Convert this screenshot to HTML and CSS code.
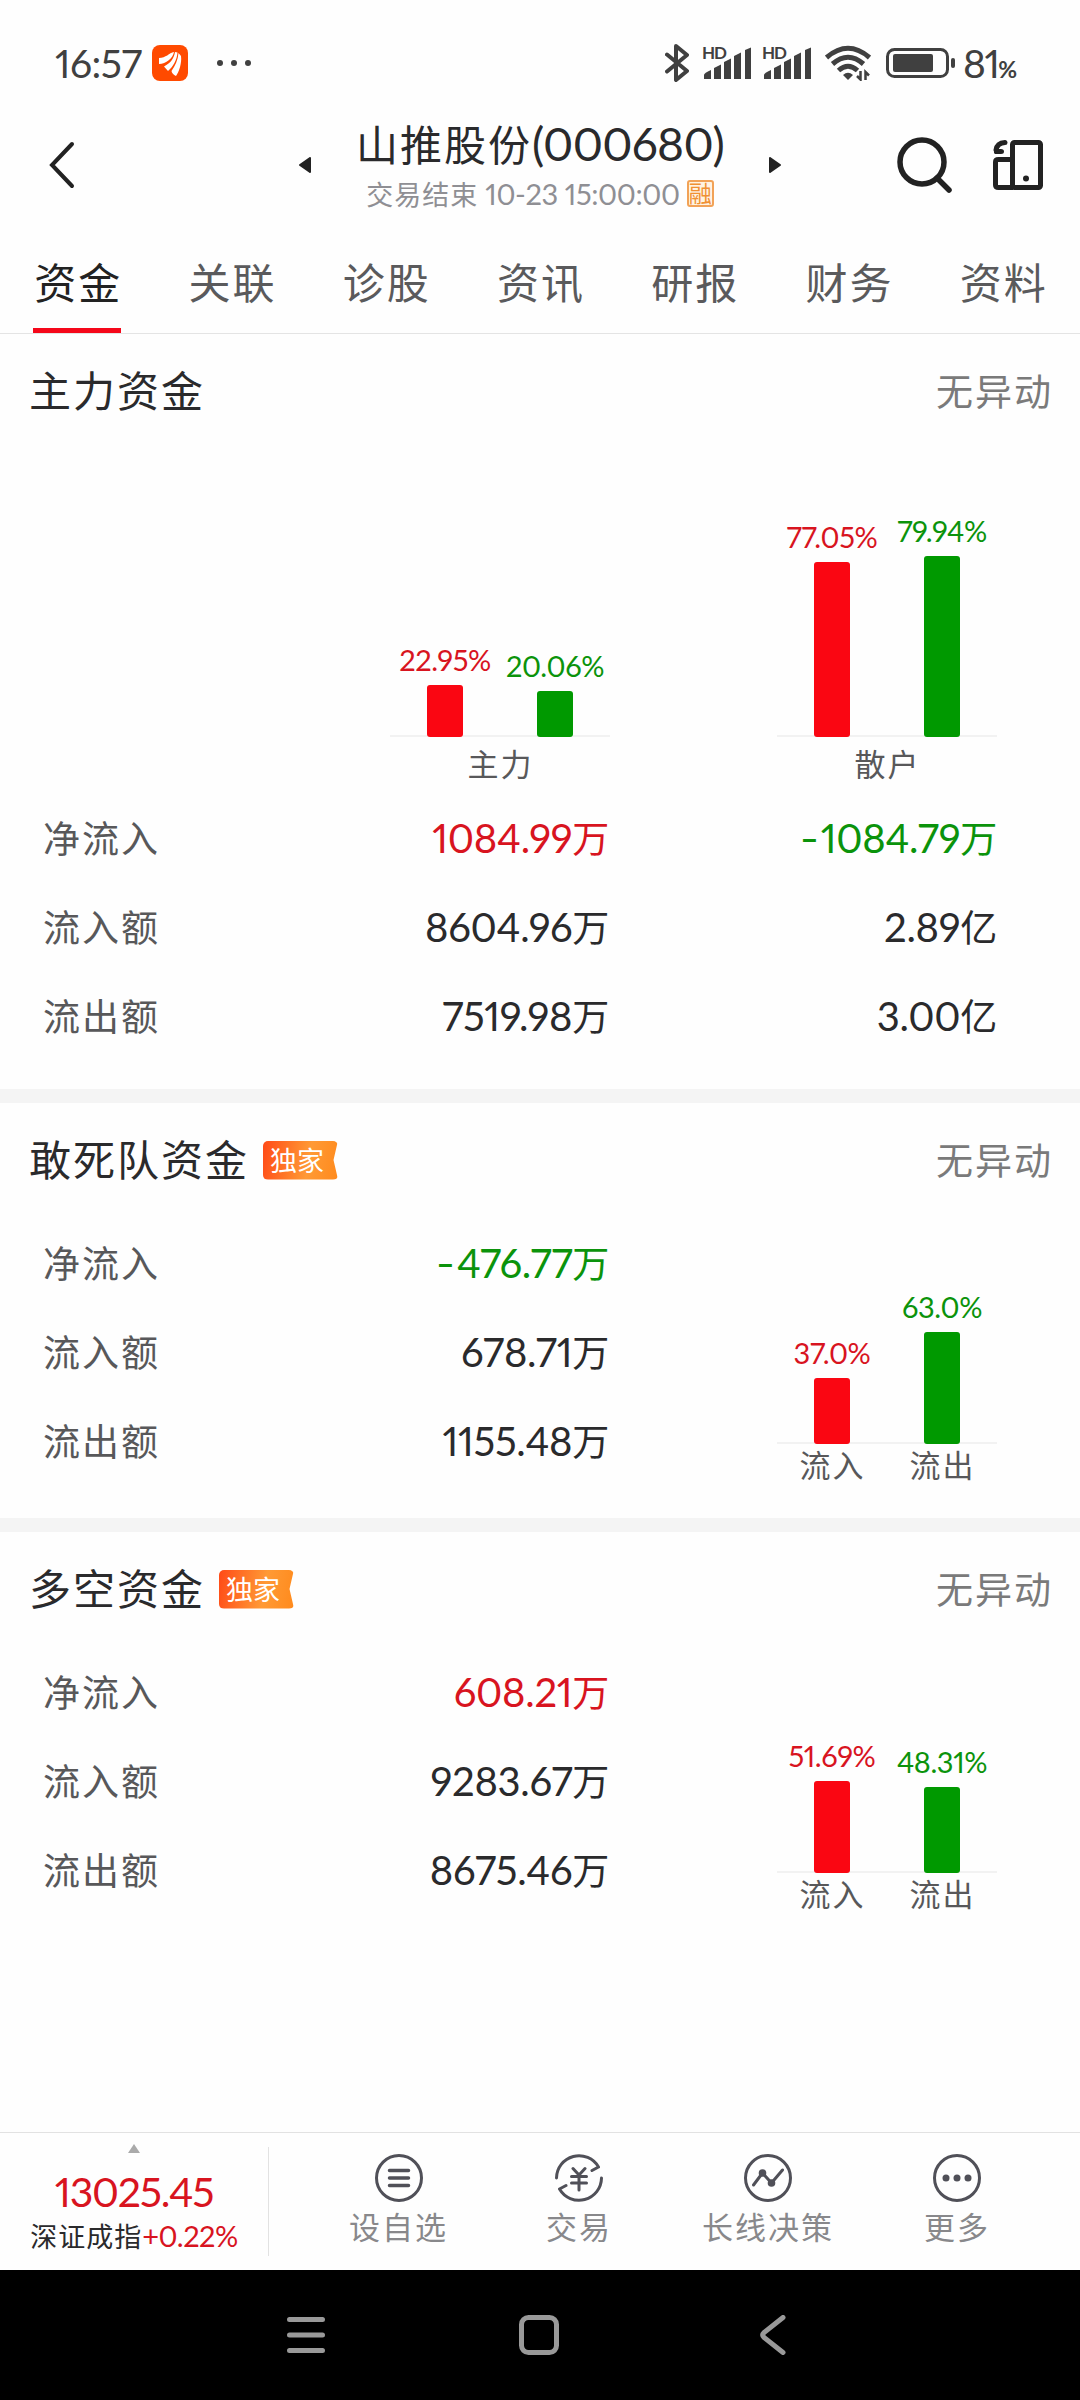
FILE: index.html
```html
<!DOCTYPE html>
<html lang="zh-CN">
<head>
  <meta charset="UTF-8">
  <meta name="viewport" content="width=device-width, initial-scale=1.0">
  <title>山推股份(000680)</title>
  <link rel="stylesheet" href="styles.css">
</head>
<body>
  <div class="status">
    <span class="time">16:57</span>
    <svg class="app" width="36" height="36" viewBox="0 0 36 36">
      <rect width="36" height="36" rx="8" fill="#ff4a00"/>
      <path d="M7 13C14 13 17 8 22 7C21 13 14 19 7 19Z" fill="#fff"/>
      <path d="M12 21.500C19 18 22 13 23 7L25.500 7.500C25 15 21 22 16 26Z" fill="#fff"/>
      <path d="M19.500 26C23 21 26 15 26.500 8L29 11C30 18 27 27 24 31Q20 29 19.500 26Z" fill="#fff"/>
    </svg>
    <span class="dots"><i></i><i></i><i></i></span>
    <div class="signals">
      <svg width="24" height="40" viewBox="0 0 24 40" fill="none" stroke="#404040" stroke-width="4" stroke-linejoin="round" stroke-linecap="round">
        <path d="M2 11.500L22 28L11 37V3L22 12L2 28.500"/>
      </svg>
      <div class="sim">
        <span>HD</span>
        <svg width="50" height="34" viewBox="0 0 50 34" fill="#404040">
          <path d="M2 33V29Q2 27 9 24V33ZM12 33V22L19 18.500V33ZM22 33V16L29 12.500V33ZM32 33V10L39 6.500V33ZM43 33V4L49 1.500V33Z"/>
        </svg>
      </div>
      <div class="sim">
        <span>HD</span>
        <svg width="50" height="34" viewBox="0 0 50 34" fill="#404040">
          <path d="M2 33V29Q2 27 9 24V33ZM12 33V22L19 18.500V33ZM22 33V16L29 12.500V33ZM32 33V10L39 6.500V33ZM43 33V4L49 1.500V33Z"/>
        </svg>
      </div>
      <svg class="wifi" width="46" height="36" viewBox="0 0 46 36" fill="none" stroke="#404040" stroke-width="5">
        <path d="M1.500 12.500Q23-6 44.500 12.500"/>
        <path d="M7.500 19Q23 5.500 38.500 19"/>
        <path d="M13.500 25.500Q23 17 32.500 25.500"/>
        <path d="M18 30Q23 25.500 28 30L23 35Z" fill="#404040" stroke="none"/>
        <path d="M35.500 26V34.500L32 31M40.500 35V27L44 30.500" stroke-width="2.500"/>
      </svg>
      <svg class="battery" width="70" height="30" viewBox="0 0 70 30">
        <rect x="1.500" y="1.500" width="60" height="27" rx="7" fill="none" stroke="#404040" stroke-width="3"/>
        <rect x="7" y="6" width="40" height="18" rx="2" fill="#404040"/>
        <rect x="65" y="10" width="4" height="10" rx="2" fill="#404040"/>
      </svg>
      <span class="power">81<small>%</small></span>
    </div>
  </div>

  <header class="header">
    <svg class="back" width="26" height="48" viewBox="0 0 26 48" fill="none" stroke="#222" stroke-width="4" stroke-linecap="round">
      <path d="M23 3L3 24L23 45"/>
    </svg>
    <svg class="prev" width="12" height="16" viewBox="0 0 12 16"><path d="M11 1V15L1 8Z" fill="#222" stroke="#222" stroke-width="2" stroke-linejoin="round"/></svg>
    <div class="stock">
      <h1>山推股份<b>(000680)</b></h1>
      <p><span class="cn">交易结束</span> 10-23 15:00:00<span class="rong">融</span></p>
    </div>
    <svg class="next" width="12" height="16" viewBox="0 0 12 16"><path d="M1 1V15L11 8Z" fill="#222" stroke="#222" stroke-width="2" stroke-linejoin="round"/></svg>
    <svg class="search" width="57" height="57" viewBox="0 0 57 57" fill="none" stroke="#222" stroke-width="5.500">
      <circle cx="26" cy="26" r="22"/>
      <path d="M41 42L53 54" stroke-linecap="round"/>
    </svg>
    <svg class="trade" width="50" height="50" viewBox="0 0 50 50" fill="none" stroke="#222" stroke-width="5">
      <rect x="19.500" y="2.500" width="28" height="45" rx="2"/>
      <path d="M19.500 19.500H5.500Q2.500 19.500 2.500 22V45Q2.500 47.500 5.500 47.500H20"/>
      <path d="M12 2.500Q4 3 3 10" stroke-linecap="round"/>
      <path d="M1 13V9H8Q11 9 11 11.500T8 14H2Z" fill="#222" stroke="none"/>
      <circle cx="33" cy="38.500" r="3" fill="#222" stroke="none"/>
    </svg>
  </header>

  <nav class="tabs">
    <span class="active">资金</span>
    <span>关联</span>
    <span>诊股</span>
    <span>资讯</span>
    <span>研报</span>
    <span>财务</span>
    <span>资料</span>
  </nav>

  <main>
    <section class="card main-fund">
      <div class="title"><h2>主力资金</h2><span class="state">无异动</span></div>
      <div class="charts">
        <div class="chart">
          <div class="bars">
            <div class="col red"><em>22.95%</em><i style="height: 52px"></i></div>
            <div class="col green"><em>20.06%</em><i style="height: 46px"></i></div>
          </div>
          <div class="names"><span>主力</span></div>
        </div>
        <div class="chart">
          <div class="bars">
            <div class="col red"><em>77.05%</em><i style="height: 175px"></i></div>
            <div class="col green"><em>79.94%</em><i style="height: 181px"></i></div>
          </div>
          <div class="names"><span>散户</span></div>
        </div>
      </div>
      <ul class="rows">
        <li><label>净流入</label><strong class="red">1084.99<u>万</u></strong><strong class="green"><s>-</s>1084.79<u>万</u></strong></li>
        <li><label>流入额</label><strong>8604.96<u>万</u></strong><strong>2.89<u>亿</u></strong></li>
        <li><label>流出额</label><strong>7519.98<u>万</u></strong><strong>3.00<u>亿</u></strong></li>
      </ul>
    </section>

    <section class="card">
      <div class="title"><h2>敢死队资金</h2><span class="only">独家</span><span class="state">无异动</span></div>
      <div class="body">
        <ul class="rows">
          <li><label>净流入</label><strong class="green"><s>-</s>476.77<u>万</u></strong></li>
          <li><label>流入额</label><strong>678.71<u>万</u></strong></li>
          <li><label>流出额</label><strong>1155.48<u>万</u></strong></li>
        </ul>
        <div class="chart">
          <div class="bars">
            <div class="col red"><em>37.0%</em><i style="height: 66px"></i></div>
            <div class="col green"><em>63.0%</em><i style="height: 112px"></i></div>
          </div>
          <div class="names"><span>流入</span><span>流出</span></div>
        </div>
      </div>
    </section>

    <section class="card last">
      <div class="title"><h2>多空资金</h2><span class="only">独家</span><span class="state">无异动</span></div>
      <div class="body">
        <ul class="rows">
          <li><label>净流入</label><strong class="red">608.21<u>万</u></strong></li>
          <li><label>流入额</label><strong>9283.67<u>万</u></strong></li>
          <li><label>流出额</label><strong>8675.46<u>万</u></strong></li>
        </ul>
        <div class="chart">
          <div class="bars">
            <div class="col red"><em>51.69%</em><i style="height: 92px"></i></div>
            <div class="col green"><em>48.31%</em><i style="height: 86px"></i></div>
          </div>
          <div class="names"><span>流入</span><span>流出</span></div>
        </div>
      </div>
    </section>
  </main>

  <footer class="toolbar">
    <div class="index">
      <svg width="12" height="9" viewBox="0 0 12 9"><path d="M6 0L12 9H0Z" fill="#aaa"/></svg>
      <strong>13025.45</strong>
      <p>深证成指<em>+0.22%</em></p>
    </div>
    <div class="actions">
      <div class="action">
        <svg width="50" height="50" viewBox="0 0 50 50"><circle cx="25" cy="25" r="22.500"/><path d="M15.500 17.500H34.500M15.500 25H34.500M15.500 32.500H34.500" stroke-width="3.500"/></svg>
        <span>设自选</span>
      </div>
      <div class="action">
        <svg width="50" height="50" viewBox="0 0 50 50"><path d="M2.500 25A22.500 22.500 0 0 1 44.500 14L38 17.500M47.500 25A22.500 22.500 0 0 1 5.500 36L12 32.500M19 15.500L25 22L31 15.500M25 22V37M17.500 23.500H32.500M17.500 30H32.500"/></svg>
        <span>交易</span>
      </div>
      <div class="action">
        <svg width="50" height="50" viewBox="0 0 50 50"><circle cx="25" cy="25" r="22.500"/><path d="M10.500 32L19.500 20L28.500 30L39.500 17"/><circle class="dot" cx="19.500" cy="20" r="3.800"/><circle class="dot" cx="28.500" cy="30" r="3.800"/></svg>
        <span>长线决策</span>
      </div>
      <div class="action">
        <svg width="50" height="50" viewBox="0 0 50 50"><circle cx="25" cy="25" r="22.500"/><circle class="dot" cx="14" cy="25" r="3.500"/><circle class="dot" cx="25" cy="25" r="3.500"/><circle class="dot" cx="36" cy="25" r="3.500"/></svg>
        <span>更多</span>
      </div>
    </div>
  </footer>

  <div class="navbar">
    <svg width="40" height="40" viewBox="0 0 40 40"><path d="M3.500 4.500H36.500M3.500 20H36.500M3.500 35.500H36.500"/></svg>
    <svg width="40" height="40" viewBox="0 0 40 40"><rect x="2.500" y="2.500" width="35" height="35" rx="7"/></svg>
    <svg width="26" height="40" viewBox="0 0 26 40"><path d="M23 2.500L4 17.500Q1.500 20 4 22.500L23 37.500"/></svg>
  </div>
</body>
</html>
```
FILE: styles.css
```css
* {
  margin: 0;
  padding: 0;
  box-sizing: border-box;
}
body {
  width: 1080px;
  height: 2400px;
  display: flex;
  flex-direction: column;
  overflow: hidden;
  background: #fefefe;
  color: #2a2a2c;
  font-family: Lato, "Noto Sans CJK SC", sans-serif;
  font-variant-numeric: proportional-nums;
}
svg {
  display: block;
  flex: none;
}
h1, h2, b, strong {
  font-weight: 400;
}
em, i {
  font-style: normal;
}
u, s {
  text-decoration: none;
}
ul {
  list-style: none;
}
.red {
  color: #d8141f;
}
.green {
  color: #0b930b;
}

/* status bar */
.status {
  height: 126px;
  padding: 0 56px 0 55px;
  display: flex;
  align-items: center;
  color: #404040;
}
.time {
  width: 97px;
  font-size: 39px;
  letter-spacing: -0.500px;
}
.dots {
  display: flex;
  gap: 8px;
  margin-left: 29px;
}
.dots i {
  width: 6px;
  height: 6px;
  border-radius: 50%;
  background: #404040;
}
.signals {
  display: flex;
  align-items: center;
  margin-left: auto;
}
.sim {
  display: grid;
  margin-left: 10px;
}
.sim span,
.sim svg {
  grid-area: 1 / 1;
}
.sim span {
  font-size: 17px;
  font-weight: 700;
  letter-spacing: -1px;
  line-height: 14px;
}
.sim:first-of-type {
  margin-left: 13px;
}
.wifi {
  margin-left: 13px;
}
.battery {
  margin-left: 15px;
}
.power {
  width: 61px;
  margin-left: 7px;
  font-size: 39px;
  letter-spacing: -1.500px;
  white-space: nowrap;
}
.power small {
  font-size: 23px;
  font-weight: 700;
}

/* header */
.header {
  height: 114px;
  display: flex;
  padding-left: 49px;
}
.back {
  margin-top: 15px;
}
.prev {
  margin: 31px 0 0 224px;
}
.stock {
  width: 428px;
  margin-left: 15px;
  text-align: center;
}
.stock h1 {
  height: 45px;
  line-height: 34px;
  font-family: "Noto Sans CJK SC", sans-serif;
  font-size: 42px;
  letter-spacing: 2px;
  white-space: nowrap;
}
.stock b {
  font-family: Lato, sans-serif;
  font-size: 46px;
  letter-spacing: -0.700px;
}
.stock p {
  display: flex;
  align-items: center;
  justify-content: center;
  height: 44px;
  color: #8f8f94;
  font-size: 29px;
  letter-spacing: -0.400px;
  white-space: pre;
}
.stock .cn {
  font-size: 27px;
  letter-spacing: 1px;
}
.rong {
  width: 27px;
  height: 27px;
  margin-left: 7px;
  border: 2px solid #f2a257;
  border-radius: 3px;
  background: #fff3e2;
  color: #f09033;
  font-size: 23px;
  letter-spacing: 0;
  line-height: 22px;
}
.next {
  margin: 31px 0 0 15px;
}
.search {
  margin: 10px 0 0 115px;
}
.trade {
  margin: 14px 0 0 40px;
}

/* tabs */
.tabs {
  display: grid;
  grid-template-columns: repeat(7, 1fr);
  justify-items: center;
  height: 94px;
  border-bottom: 1px solid #e4e4e4;
  color: #5a5a5c;
  font-size: 42px;
  letter-spacing: 2px;
}
.tabs span {
  width: 88px;
  height: 93px;
  line-height: 86px;
  text-indent: 1px;
  text-align: center;
  white-space: nowrap;
}
.tabs .active {
  background: linear-gradient(#f5071a, #f5071a) bottom / 100% 5px no-repeat;
  color: #222;
}

/* cards */
.card {
  height: 429px;
  border-bottom: 14px solid #f4f4f4;
}
.main-fund {
  height: 769px;
}
.last {
  border: 0;
}
.title {
  display: flex;
  align-items: center;
  height: 112px;
  padding: 0 27px 0 29px;
}
.title h2 {
  padding-bottom: 3px;
  font-size: 42px;
  letter-spacing: 2px;
}
.state {
  margin-left: auto;
  padding-bottom: 1px;
  color: #7a7a7a;
  font-size: 37px;
  letter-spacing: 2px;
}
.only {
  width: 75px;
  height: 39px;
  margin: 2px 0 0 14px;
  padding-left: 7px;
  border-radius: 5px;
  background: linear-gradient(100deg, #ff4a17, #ff9a35 60%, #ff8a1c);
  clip-path: polygon(0 0, 100% 0, 94% 50%, 100% 100%, 0 100%);
  color: #fff;
  font-size: 27px;
  line-height: 40px;
}
.charts {
  display: flex;
  justify-content: space-between;
  height: 350px;
  padding: 0 83px 0 390px;
}
.chart {
  display: flex;
  flex-direction: column;
  justify-content: flex-end;
  width: 220px;
}
.bars {
  display: flex;
  background: linear-gradient(#f2f2f2, #f2f2f2) bottom / 100% 2px no-repeat;
}
.col {
  display: flex;
  flex-direction: column;
  align-items: center;
  justify-content: flex-end;
  width: 110px;
}
.col em {
  margin-bottom: 9px;
  font-size: 29px;
  letter-spacing: -0.400px;
  line-height: 32px;
}
.col i {
  width: 36px;
  border-radius: 3px;
}
.col.red i {
  background: #fa0612;
}
.col.green i {
  background: #009900;
}
.names {
  display: flex;
  justify-content: space-around;
  height: 59px;
  color: #58585a;
  font-size: 31px;
  letter-spacing: 2px;
  line-height: 54px;
  text-indent: 1px;
}
.rows li {
  display: flex;
  align-items: center;
  height: 89px;
}
.rows label {
  width: 199px;
  margin-left: 43px;
  padding-bottom: 2px;
  color: #58585a;
  font-size: 37px;
  letter-spacing: 2px;
}
.rows strong {
  width: 367px;
  padding-top: 2px;
  font-size: 40px;
  letter-spacing: -0.300px;
  line-height: 60px;
  text-align: right;
  white-space: nowrap;
}
.rows strong + strong {
  width: 388px;
}
.rows u {
  font-size: 37px;
}
.rows s {
  display: inline-block;
  transform: scaleX(1.300);
  margin-right: 4px;
}
.main-fund .rows {
  margin-top: -3px;
}
.body {
  display: flex;
}
.body .rows {
  width: 777px;
  padding-top: 3px;
}
.body .chart {
  height: 272px;
}
.body .names {
  height: 43px;
  line-height: 43px;
}

/* bottom toolbar */
.toolbar {
  display: flex;
  height: 138px;
  margin-top: auto;
  border-top: 1px solid #e2e2e2;
}
.index {
  display: flex;
  flex-direction: column;
  align-items: center;
  width: 269px;
  height: 109px;
  margin-top: 14px;
  border-right: 1px solid #e2e2e2;
}
.index strong {
  height: 57px;
  margin-top: 9px;
  color: #d8141f;
  font-size: 41px;
  letter-spacing: -1.300px;
  line-height: 60px;
}
.index svg {
  margin-top: -3px;
}
.index p {
  font-size: 27px;
  letter-spacing: 1px;
  line-height: 34px;
  white-space: nowrap;
}
.index em {
  color: #d8141f;
  font-size: 29px;
  letter-spacing: -0.500px;
}
.actions {
  display: flex;
  gap: 90px;
  padding: 20px 0 0 80px;
}
.action {
  display: flex;
  flex-direction: column;
  align-items: center;
  color: #88888b;
  font-size: 31px;
  letter-spacing: 2px;
  line-height: 46px;
}
.action:first-child {
  margin-right: 8px;
}
.action span {
  margin-top: 1px;
}
.action svg {
  fill: none;
  stroke: #505058;
  stroke-width: 3;
  stroke-linecap: round;
  stroke-linejoin: round;
}
.action .dot {
  fill: #505058;
  stroke: none;
}

/* system keys */
.navbar {
  display: flex;
  align-items: center;
  height: 130px;
  padding-left: 286px;
  background: #000;
}
.navbar svg {
  margin-right: 193px;
  fill: none;
  stroke: #999;
  stroke-width: 5;
  stroke-linecap: round;
}
.navbar svg + svg {
  margin-right: 201px;
}
```
